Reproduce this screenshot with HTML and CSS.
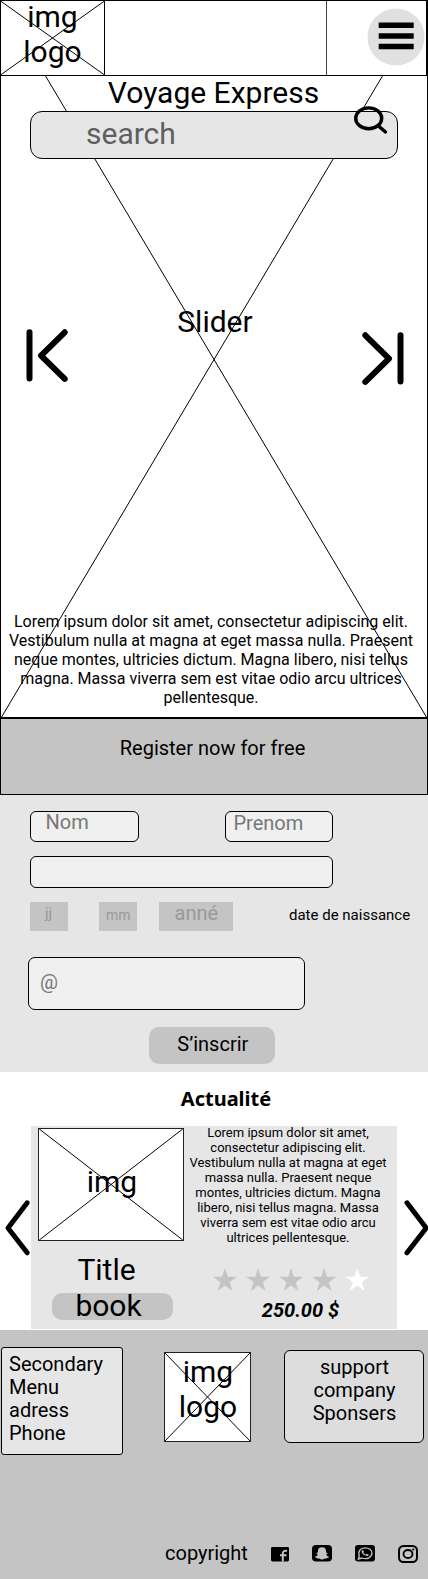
FILE: index.html
```html
<!DOCTYPE html>
<html lang="fr">
<head>
<meta charset="utf-8">
<title>Voyage Express</title>
<link rel="stylesheet" href="styles.css">
</head>
<body>
<div class="top">
  <svg class="cross" viewBox="0 0 428 719"><path d="M1 1L427 718M427 1L1 718"/></svg>
  <header class="header">
    <div class="logo">
      <svg class="cross" viewBox="0 0 104 74"><path d="M0 0L104 74M104 0L0 74"/></svg>
      <span class="big">img<br>logo</span>
    </div>
    <div class="banner"></div>
    <div class="menu">
      <svg width="58" height="58" viewBox="0 0 58 58"><circle cx="29" cy="29" r="28.5" fill="#e0e0e0"/><path d="M11.7 17.2h35M11.7 28h35M11.7 38.5h35" stroke="#000" stroke-width="5.4"/></svg>
    </div>
  </header>
  <h1 class="title big">Voyage Express</h1>
  <div class="search">
    <span class="big">search</span>
    <svg class="lens" width="36" height="30" viewBox="0 0 36 30"><ellipse cx="16.7" cy="13.3" rx="13" ry="10.4"/><path d="M26 20.6L33.5 27"/></svg>
  </div>
  <div class="slider">
    <svg class="prev" width="44" height="56" viewBox="0 0 44 56"><path d="M5.5 5.2V51.5M40.7 5.3L17 28.6L40.7 51.9"/></svg>
    <span class="big">Slider</span>
    <svg class="next" width="44" height="56" viewBox="0 0 44 56"><path d="M38.5 5.2V51.5M3.3 5.3L27 28.6L3.3 51.9"/></svg>
  </div>
  <p class="intro">Lorem ipsum dolor sit amet, consectetur adipiscing elit.<br>Vestibulum nulla at magna at eget massa nulla. Praesent<br>neque montes, ultricies dictum. Magna libero, nisi tellus<br>magna. Massa viverra sem est vitae odio arcu ultrices<br>pellentesque.</p>
</div>
<div class="register">Register now for free</div>
<section class="form">
  <div class="names"><div class="field nom">Nom</div><div class="field prenom">Prenom</div></div>
  <div class="field wide"></div>
  <div class="dates">
    <div class="date day">jj</div><div class="date month">mm</div><div class="date year">anné</div>
    <span class="birth">date de naissance</span>
  </div>
  <div class="field mail">@</div>
  <div class="submit">S’inscrir</div>
</section>
<section class="news">
  <h2 class="heading">Actualité</h2>
  <div class="carousel">
    <svg class="arrow" width="31" height="60" viewBox="0 0 31 60"><path d="M27.2 4.8L8 30L27.2 54.8"/></svg>
    <article class="card">
      <div class="book">
        <div class="photo">
          <svg class="cross" viewBox="0 0 146 113"><path d="M0 0L146 113M146 0L0 113"/></svg>
          <span class="big">img</span>
        </div>
        <div class="big name">Title</div>
        <div class="big pill">book</div>
      </div>
      <div class="details">
        <p class="blurb">Lorem ipsum dolor sit amet,<br>consectetur adipiscing elit.<br>Vestibulum nulla at magna at eget<br>massa nulla. Praesent neque<br>montes, ultricies dictum. Magna<br>libero, nisi tellus magna. Massa<br>viverra sem est vitae odio arcu<br>ultrices pellentesque.</p>
        <svg class="stars" width="158" height="24" viewBox="0 0 158 24">
          <defs><path id="star" d="M12 0L14.9 8.8H24L16.6 14.2L19.4 23L12 17.6L4.6 23L7.4 14.2L0 8.8H9.1Z"/></defs>
          <g fill="#c4c4c4"><use href="#star"/><use href="#star" x="33.1"/><use href="#star" x="66.1"/><use href="#star" x="99.2"/></g><use href="#star" x="132.3" fill="#fff"/>
        </svg>
        <div class="price">250.00 $</div>
      </div>
    </article>
    <svg class="arrow" width="31" height="60" viewBox="0 0 31 60"><path d="M10 4.8L29.2 30L10 54.8"/></svg>
  </div>
</section>
<footer class="footer">
  <div class="columns">
    <div class="links">Secondary<br>Menu<br>adress<br>Phone</div>
    <div class="mark">
      <svg class="cross" viewBox="0 0 86 89"><path d="M0 0L86 89M86 0L0 89"/></svg>
      <span class="big">img<br>logo</span>
    </div>
    <div class="support">support<br>company<br>Sponsers</div>
  </div>
  <div class="bottom">
    <span class="copy">copyright</span>
    <svg class="fb" width="18" height="15" viewBox="0 0 18 15"><rect width="18" height="14.5" rx="1.4"/><path d="M11.8 14.5V6.2Q11.8 3.5 16 3.8M9 8.2h6.5" fill="none" stroke="#c4c4c4" stroke-width="2"/></svg>
    <svg class="snap" width="20" height="17" viewBox="0 0 20 17"><rect width="20" height="16.5" rx="4"/><path d="M10 2.3C7.2 2.3 5.9 3.8 5.9 6.2V7.6L4.3 7.9Q4.8 9.2 5.9 9.5Q5 11.1 2.8 11.9Q3.4 12.8 5.1 12.9L5.6 13.7Q7.4 13.2 8.3 13.9Q10 15.1 11.7 13.9Q12.6 13.2 14.4 13.7L14.9 12.9Q16.6 12.8 17.2 11.9Q15 11.1 14.1 9.5Q15.2 9.2 15.7 7.9L14.1 7.6V6.2C14.1 3.8 12.8 2.3 10 2.3Z" fill="#c4c4c4"/></svg>
    <svg class="wa" width="20" height="17" viewBox="0 0 20 17"><rect width="20" height="16.5" rx="3"/><path d="M3.3 14L4.3 10.9C2.6 6.4 5.6 2.8 10.1 2.8C14 2.8 17 5.1 17 8.1C17 12.2 12.1 14.9 7.1 13Z" fill="none" stroke="#c4c4c4" stroke-width="1.3"/><path d="M7.1 5.4Q5.7 6.4 7.2 8.3Q9.4 11.2 12.1 11.1Q14 10.7 13.7 9.6L11.8 8.8L10.9 9.8Q9.2 9 8.2 7.6L8.9 6.8L8 5.1Z" fill="#c4c4c4"/></svg>
    <svg class="ig" width="20" height="18" viewBox="0 0 20 18"><rect x="1" y="1" width="18" height="16" rx="4.5" fill="none" stroke="#000" stroke-width="2"/><ellipse cx="10" cy="9" rx="4.5" ry="4" fill="none" stroke="#000" stroke-width="1.8"/><ellipse cx="15.2" cy="4.5" rx="1.2" ry="1.1"/></svg>
  </div>
</footer>
</body>
</html>
```
FILE: styles.css
```css
* { box-sizing: border-box; }
body { margin: 0; width: 428px; background: #fff; color: #000; font-family: Roboto, sans-serif; font-size: 20px; line-height: 23px; }
svg { display: block; flex: none; }
p, h1, h2 { margin: 0; }
.big { font-size: 30px; line-height: 35px; font-weight: 400; }
.cross { position: absolute; inset: 0; width: 100%; height: 100%; z-index: -1; fill: none; stroke: #000; stroke-width: 1; }

.top { position: relative; z-index: 0; height: 718px; border: solid #000; border-width: 0 1px 1px; }
.top > .cross { inset: 0 -1px -1px; width: 428px; height: 719px; }
.header { display: flex; width: 427px; height: 76px; margin-left: -1px; background: #fff; border: 1px solid #000; }
.logo { position: relative; z-index: 0; width: 104px; border-right: 1px solid #000; text-align: center; }
.logo .big { display: block; margin-top: -2px; }
.banner { width: 222px; border-right: 1px solid #444; }
.menu { flex: 1; padding: 6.5px 0 0 40.2px; }
.title { text-align: center; margin-top: -1px; padding-right: 1px; }
.search { position: relative; margin: 1px 0 0 29px; width: 368px; height: 48px; background: #e6e6e6; border: 1px solid #000; border-radius: 12px; color: #5f5f5f; padding: 4px 0 0 55px; }
.lens { position: absolute; left: 321px; top: -7px; fill: none; stroke: #000; stroke-width: 3.4; stroke-linecap: round; }
.slider { display: flex; justify-content: space-between; align-items: flex-start; height: 308px; padding: 145px 21px 0 23px; }
.slider svg { fill: none; stroke: #000; stroke-width: 6; stroke-linecap: round; stroke-linejoin: round; }
.prev { margin-top: 23px; }
.next { margin-top: 26px; }
.intro { margin-top: 145px; padding-right: 6px; text-align: center; font-size: 16px; line-height: 19px; white-space: nowrap; }

.register { height: 77px; background: #c4c4c4; border: 1px solid #000; padding: 18px 3px 0 0; text-align: center; }
.form { height: 277px; background: #e6e6e6; padding: 16px 0 0 30px; }
.field { background: #f0f0f0; border: 1px solid #000; border-radius: 6px; color: #777; }
.names { display: flex; gap: 86px; }
.nom { width: 109px; height: 31px; padding-left: 14.5px; line-height: 21px; }
.prenom { width: 108px; height: 31px; padding-left: 7.5px; }
.wide { width: 303px; height: 32px; margin-top: 14px; }
.dates { display: flex; height: 29px; margin-top: 14px; color: #999; }
.date { background: #c4c4c4; height: 29px; }
.day { width: 38px; font-size: 15px; line-height: 18px; padding: 2px 0 0 15px; }
.month { width: 38px; margin-left: 31px; font-size: 14px; line-height: 16px; padding: 5px 0 0 7px; }
.year { width: 74px; margin-left: 22px; padding-left: 15.5px; }
.birth { margin-left: 56px; color: #000; font-size: 15px; line-height: 18px; padding-top: 4px; }
.mail { width: 277px; height: 53px; margin: 26px 0 0 -2px; border-radius: 7px; padding: 13px 0 0 11px; }
.submit { width: 126px; height: 36.5px; margin: 17px 0 0 119.3px; background: #c4c4c4; border-radius: 10px; text-align: center; padding: 6px 0 0 1px; }

.news { height: 258px; padding-top: 13px; }
.heading { font: 700 20px/27px "Noto Sans", sans-serif; text-align: center; padding-left: 24px; }
.carousel { display: flex; margin-top: 14px; height: 203px; }
.arrow { margin-top: 72px; fill: none; stroke: #000; stroke-width: 5; stroke-linecap: round; stroke-linejoin: round; }
.card { display: flex; width: 366px; height: 203px; background: #e6e6e6; }
.book { width: 155px; padding: 2px 0 0 7px; text-align: center; }
.photo { position: relative; z-index: 0; width: 146px; height: 113px; background: #fff; border: 1px solid #222; padding-top: 35px; }
.photo .big { display: block; padding-left: 2px; }
.name { margin-top: 11px; padding-right: 11px; }
.pill { width: 121px; height: 26.5px; margin: 6px 0 0 13.8px; background: #c4c4c4; border-radius: 10px; line-height: 25px; padding-right: 7.5px; }
.details { flex: 1; padding-right: 7px; text-align: center; }
.blurb { font-size: 13px; line-height: 15px; white-space: nowrap; margin-top: -1px; }
.stars { margin: 23px 0 0 27px; }
.price { font-weight: 700; font-style: italic; margin-top: 7px; padding-left: 25px; }

.footer { height: 249px; background: #c4c4c4; padding: 17px 0 0 1px; }
.columns { display: flex; height: 198px; align-items: flex-start; }
.links { width: 122px; height: 108px; background: #e6e6e6; border: 1px solid #000; border-radius: 3px; padding: 5px 0 0 7px; }
.mark { position: relative; z-index: 0; width: 87px; height: 90px; margin: 5px 0 0 41px; background: #fff; border: 1px solid #222; text-align: center; padding: 1px 0 0 1px; }
.mark .big { display: block; }
.support { width: 140px; height: 93px; margin: 3px 0 0 33px; background: #ddd; border: 1px solid #000; border-radius: 6px; text-align: center; padding: 5px 0 0 1px; }
.bottom { display: flex; align-items: flex-start; padding-left: 164px; }
.copy { width: 106px; margin-top: -3px; }
.fb { margin-top: 1.5px; }
.snap { margin-left: 23px; }
.wa, .ig { margin-left: 23px; }
```
